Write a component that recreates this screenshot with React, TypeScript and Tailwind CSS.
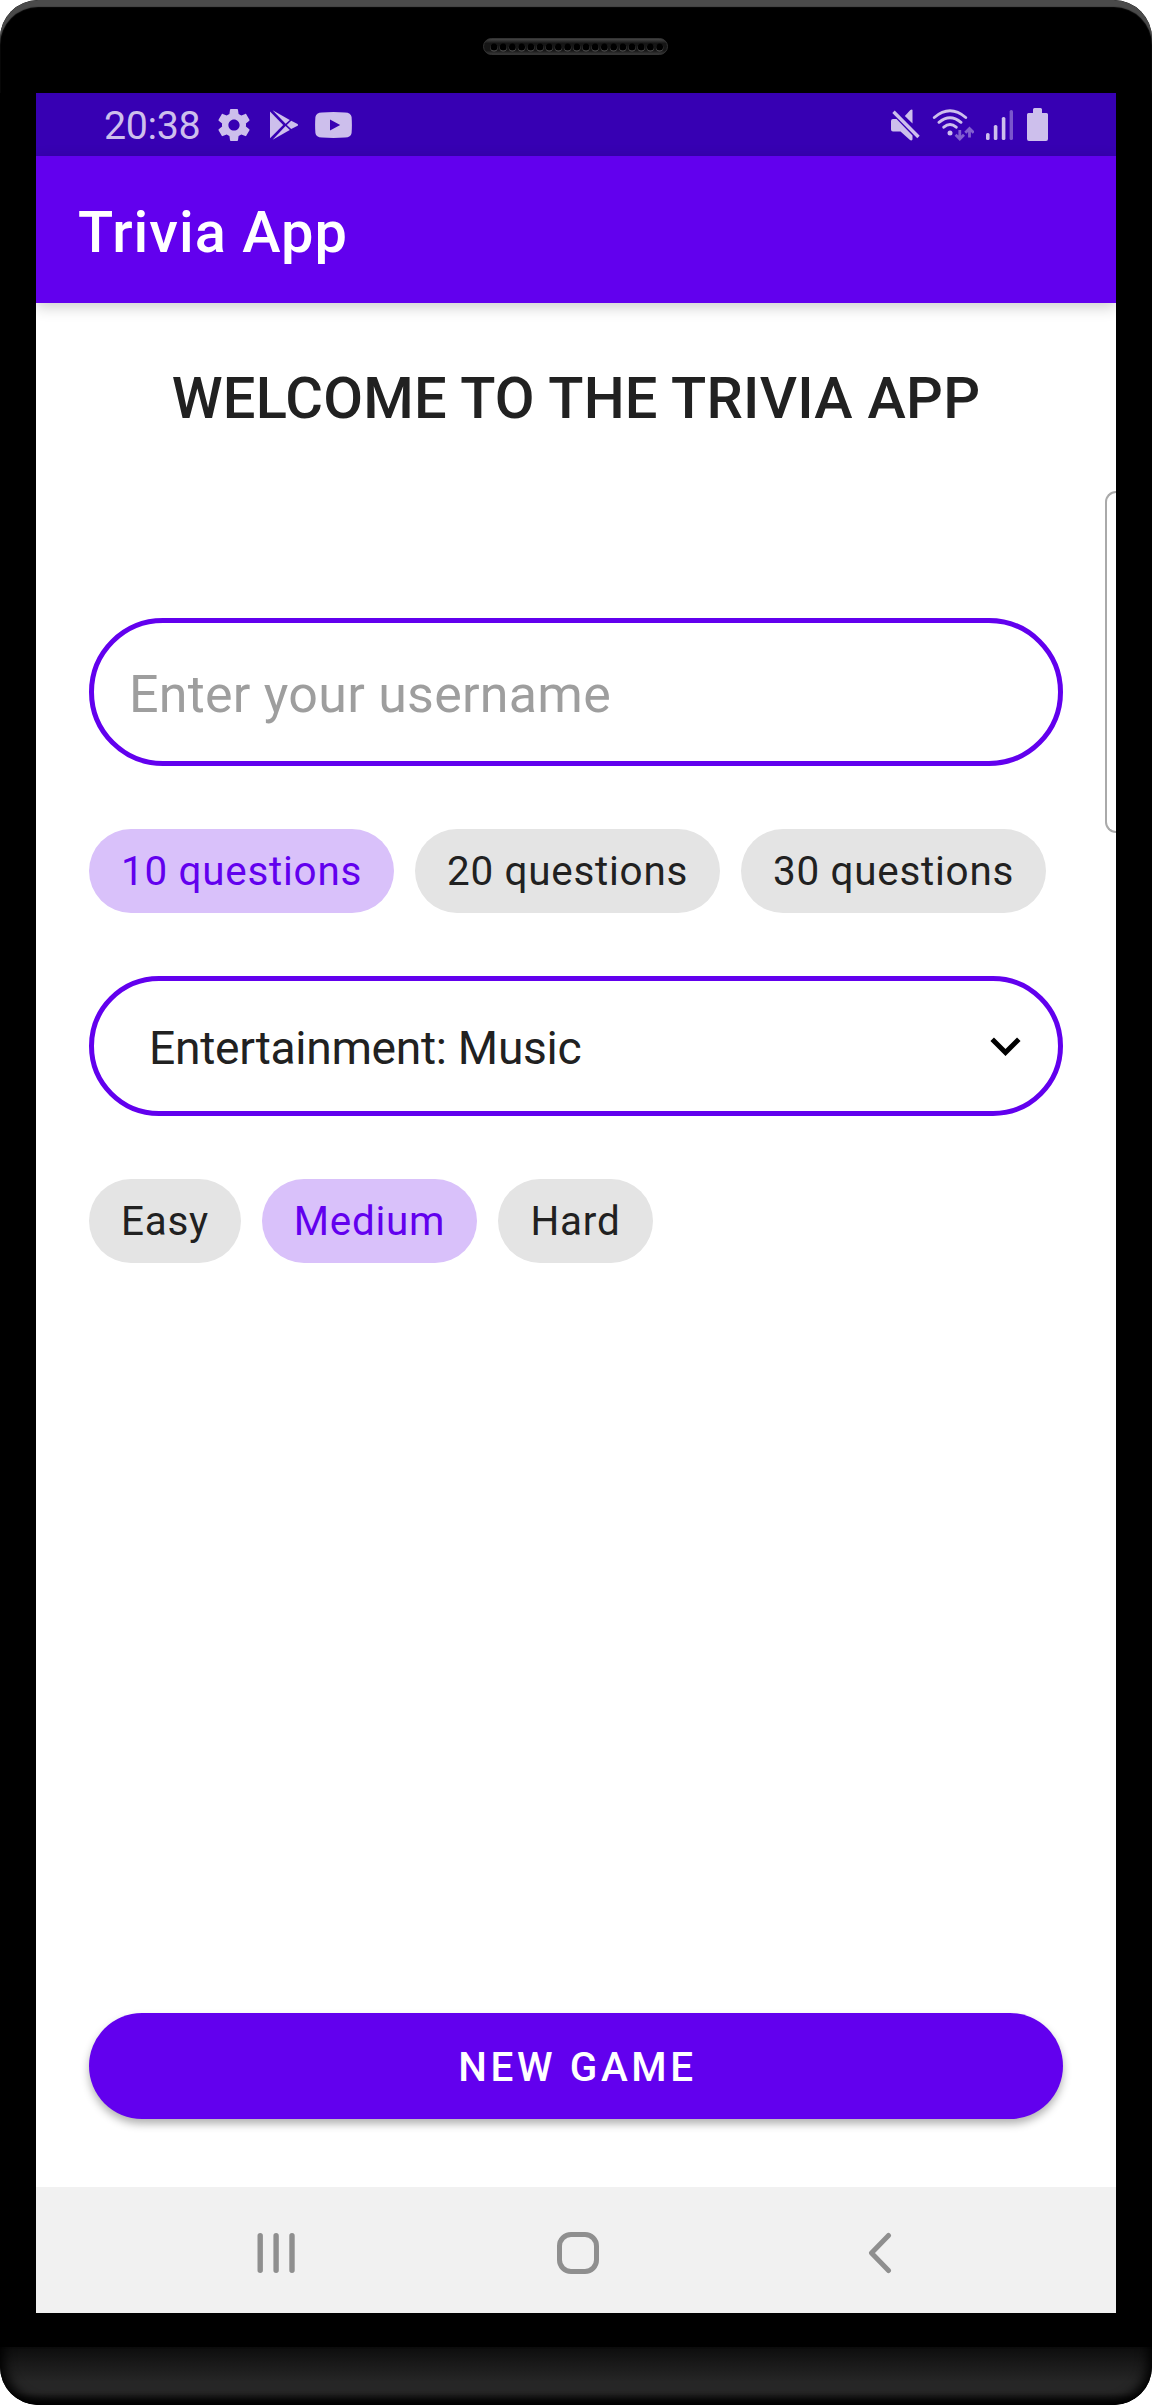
const roboto = "font-[Roboto,'Liberation_Sans',sans-serif]";

function Speaker() {
  return (
    <svg width="185" height="17" viewBox="0 0 185 17" className="block">
      <defs>
        <linearGradient id="rim" x1="0" y1="0" x2="0" y2="1">
          <stop offset="0" stopColor="#4a4a4a" />
          <stop offset="0.3" stopColor="#161616" />
          <stop offset="0.75" stopColor="#161616" />
          <stop offset="1" stopColor="#3c3c3c" />
        </linearGradient>
      </defs>
      <rect x="0.5" y="0.5" width="184" height="16" rx="8" fill="url(#rim)" stroke="#333" strokeWidth="1" />
      {Array.from({ length: 19 }, (_, i) => (
        <g key={i}>
          <circle cx={11 + i * 9.2} cy="9.8" r="3.7" fill="#555" />
          <circle cx={11 + i * 9.2} cy="9" r="3.5" fill="#000" />
        </g>
      ))}
    </svg>
  );
}

function StatusBar() {
  return (
    <div className="flex h-[63px] items-center justify-between bg-[#3700b3] px-[68px] text-[#cdbfec]">
      <div className="flex items-center">
        <span className="w-[98px] whitespace-nowrap pt-[2px] text-[39.4px] leading-[61px] tracking-[-0.01em]">20:38</span>
        <svg width="32" height="32" viewBox="2 2 20 20" className="ml-[16px]" fill="currentColor">
          <path d="M19.43 12.98c.04-.32.07-.64.07-.98s-.03-.66-.07-.98l2.11-1.65c.19-.15.24-.42.12-.64l-2-3.46c-.12-.22-.39-.3-.61-.22l-2.49 1c-.52-.4-1.08-.73-1.69-.98l-.38-2.65C14.46 2.18 14.25 2 14 2h-4c-.25 0-.46.18-.49.42l-.38 2.65c-.61.25-1.17.59-1.69.98l-2.49-1c-.23-.09-.49 0-.61.22l-2 3.46c-.13.22-.07.49.12.64l2.11 1.65c-.04.32-.07.65-.07.98s.03.66.07.98l-2.11 1.65c-.19.15-.24.42-.12.64l2 3.46c.12.22.39.3.61.22l2.49-1c.52.4 1.08.73 1.69.98l.38 2.65c.03.24.24.42.49.42h4c.25 0 .46-.18.49-.42l.38-2.65c.61-.25 1.17-.59 1.69-.98l2.49 1c.23.09.49 0 .61-.22l2-3.46c.12-.22.07-.49-.12-.64l-2.11-1.65zM12 15.5c-1.93 0-3.5-1.57-3.5-3.5s1.57-3.5 3.5-3.5 3.5 1.57 3.5 3.5-1.57 3.5-3.5 3.5z" />
        </svg>
        <svg width="28" height="30" viewBox="0 0 28 30" className="ml-[20px]" fill="currentColor">
          <path d="M0 1.5 13.2 14.9 0 28.3Z" />
          <path d="M2.6 0.3 19.8 10 15.6 13.8Z" />
          <path d="M2.6 29.7 19.8 20 15.6 16.1Z" />
          <path d="M16.8 14.9 21.2 10.8 27.6 14Q28.4 14.9 27.6 15.8L21.2 19.1Z" />
        </svg>
        <svg width="37" height="26" viewBox="0 0 37 26" className="ml-[17px]" fill="currentColor">
          <path fillRule="evenodd" d="M7 .4Q18.5-.3 30 .4 36 .6 36.6 5 37.2 13 36.6 21 36 25.4 30 25.6 18.5 26.4 7 25.6 1 25.4.4 21-.2 13 .4 5 1 .6 7 .4ZM15 7.6V18.4L25.2 13Z" />
        </svg>
      </div>
      <div className="flex items-center">
        <svg width="29" height="32" viewBox="0 0 29 32" fill="currentColor">
          <path d="M13.8 7 19.4 1Q21.5 0 21.5 1.5V14.5Z" />
          <path d="M2.5 2.8 27.5 28" stroke="#3700b3" strokeWidth="6" />
          <path d="M2 10H5.5L21.5 26.5V30.5Q20.5 32 19 31L9.5 22.5H2Q0 22.5 0 20.5V12Q0 10 2 10Z" />
          <path d="M2.5 2.8 27.5 28" stroke="currentColor" strokeWidth="3.4" />
        </svg>
        <svg width="42" height="32" viewBox="0 0 42 32" className="ml-[12px]" fill="none" stroke="currentColor" strokeWidth="2.9" strokeLinecap="round">
          <path d="M2.3 8.5Q18 -5 33.7 8.5M7 13.3Q18 4 29 13.3M11.8 18.2Q18 13 24.2 18.2" />
          <circle cx="18" cy="24" r="2.5" fill="currentColor" stroke="none" />
          <g opacity="0.5" strokeWidth="2.8" strokeLinecap="butt">
            <path d="M27.8 21V30M23.6 25.7 27.8 30 32 25.7M37.5 28.5V19.5M33.3 23.8 37.5 19.5 41.7 23.8" />
          </g>
        </svg>
        <svg width="27" height="32" viewBox="0 0 27 32" className="ml-[12px]" fill="currentColor">
          <rect x="0" y="24" width="3.6" height="7" rx="1.6" />
          <rect x="7.8" y="16" width="3.6" height="15" rx="1.6" />
          <rect x="15.8" y="8" width="3.6" height="23" rx="1.6" />
          <rect x="23.6" y="1" width="3.4" height="30" rx="1.6" opacity="0.45" />
        </svg>
        <svg width="21" height="33" viewBox="0 0 21 33" className="ml-[14px]" fill="currentColor">
          <path d="M6 1.5Q6 0 7.5 0H13.5Q15 0 15 1.5V5H19.5Q21 5 21 6.5V31Q21 33 19 33H2Q0 33 0 31V6.5Q0 5 1.5 5H6Z" />
        </svg>
      </div>
    </div>
  );
}

function Chip({ label, selected, width }: { label: string; selected?: boolean; width: string }) {
  return (
    <button
      className={`flex h-[84px] ${width} items-center justify-center rounded-full pt-[2px] whitespace-nowrap text-[40.4px] tracking-[0.0185em] ${
        selected ? "bg-[#d9c1fa] text-[#6200ee]" : "bg-[#e4e4e4] text-[#212121]"
      }`}
    >
      {label}
    </button>
  );
}

function NavBar() {
  return (
    <div className="flex h-[126px] items-center bg-[#f1f1f1] pl-[221px] pt-1.5">
      <svg width="39" height="42" viewBox="0 0 39 42" fill="none" stroke="#8f8f8f" strokeWidth="5.4" strokeLinecap="round">
        <path d="M3.2 3.8V38.2M19.1 3.8V38.2M35 3.8V38.2" />
      </svg>
      <div className="ml-[261px] h-[42px] w-[42px] rounded-[14px] border-[5px] border-[#8f8f8f]" />
      <svg width="24" height="42" viewBox="0 0 24 42" className="ml-[269px]" fill="none" stroke="#8f8f8f" strokeWidth="5" strokeLinecap="round" strokeLinejoin="round">
        <path d="M20.5 3.5 3.5 21 20.5 38.5" />
      </svg>
    </div>
  );
}

export default function App() {
  return (
    <div className={`h-[2405px] w-[1152px] bg-white antialiased ${roboto}`}>
      <div className="flex h-full w-full flex-col overflow-hidden rounded-[38px] bg-black">
        <div className="flex h-[93px] shrink-0 justify-center rounded-t-[38px] pt-[38px] pr-px shadow-[inset_0_7px_1px_#4a4a4a]">
          <Speaker />
        </div>
        <div className="relative mx-[36px] flex h-[2220px] shrink-0 flex-col bg-white">
          <StatusBar />
          <header className="flex h-[147px] items-center bg-[#6200ee] pl-[42px] pt-1.5 shadow-[0_4px_14px_rgba(0,0,0,0.2)]">
            <h1 className="whitespace-nowrap text-[57.75px] font-medium tracking-[0.0175em] text-white">Trivia App</h1>
          </header>
          <main className="flex grow flex-col overflow-hidden px-[53px] pb-[68px]">
            <h2 className="mt-[53px] whitespace-nowrap text-center text-[57.75px] leading-[84px] font-medium tracking-[0.0045em] text-[#212121]">
              WELCOME TO THE TRIVIA APP
            </h2>
            <div className="mt-[178px] flex h-[148px] shrink-0 items-center rounded-full border-[5px] border-[#6200ee] pl-[35px] pt-[5px]">
              <input
                className="w-full bg-transparent text-[51.98px] tracking-[0.005em] outline-none placeholder:text-[#9e9e9e]"
                placeholder="Enter your username"
              />
            </div>
            <div className="mt-[63px] flex gap-[21px]">
              <Chip label="10 questions" selected width="w-[305px]" />
              <Chip label="20 questions" width="w-[305px]" />
              <Chip label="30 questions" width="w-[305px]" />
            </div>
            <div className="mt-[63px] flex h-[140px] shrink-0 items-center justify-between rounded-full border-[5px] border-[#6200ee] pl-[55px] pr-[37px]">
              <span className="whitespace-nowrap pt-[5px] text-[46.2px] tracking-[-0.0065em] text-[#212121]">Entertainment: Music</span>
              <svg width="31" height="19" viewBox="0 0 31 19" fill="none" stroke="#000" strokeWidth="5">
                <path d="M2.2 2.2 15.5 15.5 28.8 2.2" />
              </svg>
            </div>
            <div className="mt-[63px] flex gap-[21px]">
              <Chip label="Easy" width="w-[152px]" />
              <Chip label="Medium" selected width="w-[215px]" />
              <Chip label="Hard" width="w-[155px]" />
            </div>
            <button className="mt-auto flex h-[106px] shrink-0 items-center justify-center rounded-full bg-[#6200ee] pt-[4px] pl-[3px] text-[40.4px] font-medium tracking-[0.0893em] text-white shadow-[0_5px_8px_rgba(0,0,0,0.3)]">
              NEW GAME
            </button>
          </main>
          <NavBar />
          <div className="absolute top-[398px] right-0 h-[342px] w-[11px] rounded-l-[11px] border-y-2 border-l-2 border-[#aaaaaa]" />
        </div>
        <div className="mt-[34px] h-[58px] shrink-0 rounded-b-[38px] bg-[linear-gradient(#0d0d0d,#262626_60%,#262626_78%,#000)] shadow-[inset_10px_-6px_12px_-6px_#000,inset_-10px_-6px_12px_-6px_#000]" />
      </div>
    </div>
  );
}
